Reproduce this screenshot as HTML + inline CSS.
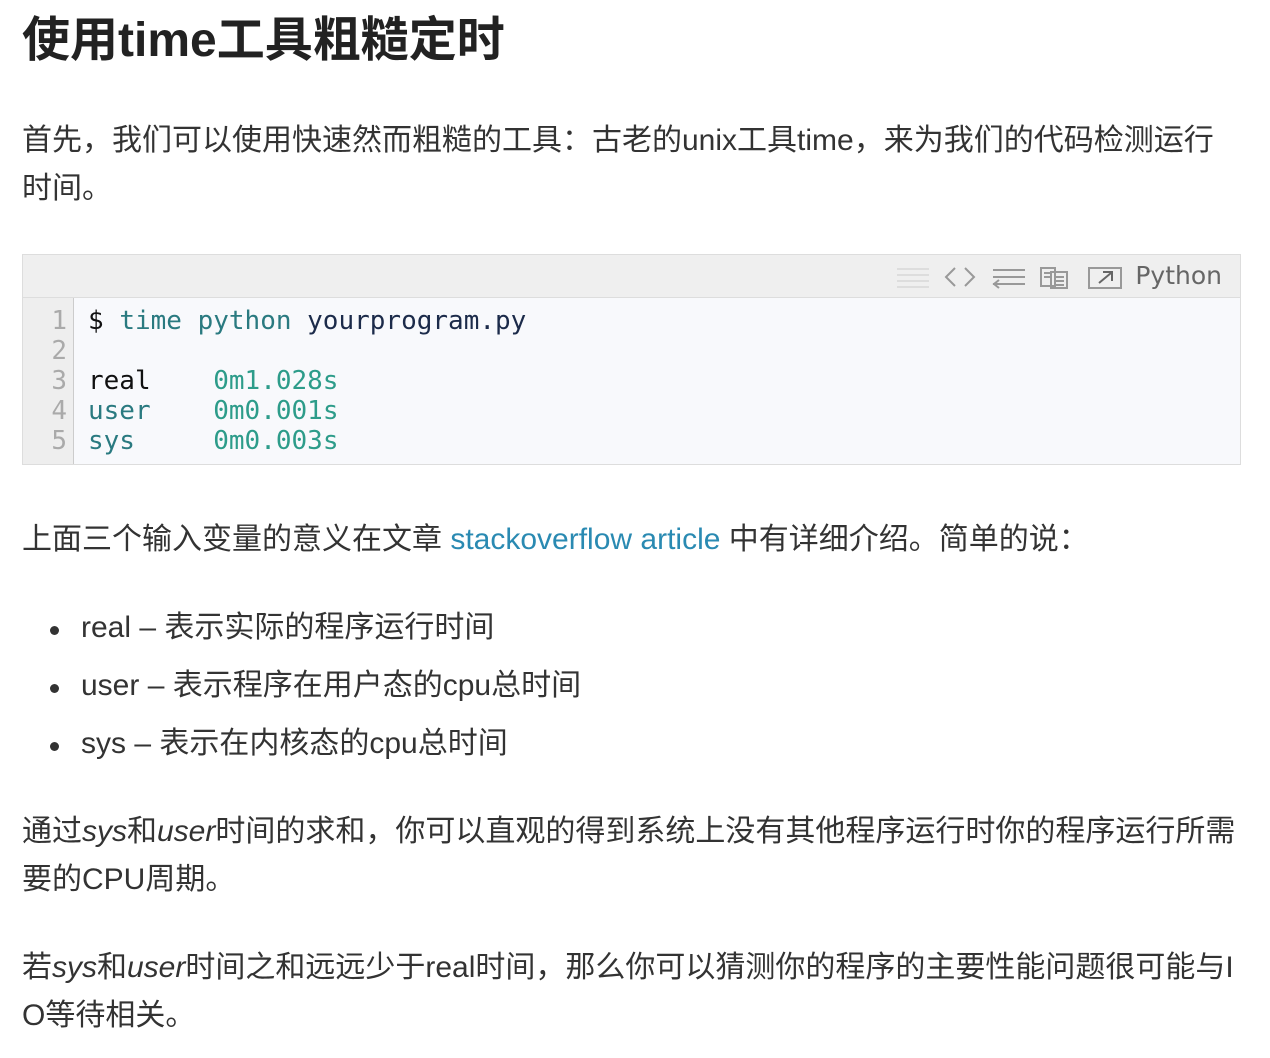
<!DOCTYPE html>
<html><head><meta charset="utf-8"><style>
body{margin:0;background:#fff;width:1270px;height:1058px;overflow:hidden;font-family:"Liberation Sans","Noto Sans CJK SC",sans-serif;color:#333}
.t{position:absolute;left:22px;white-space:nowrap}
h1{position:absolute;left:22px;top:11px;margin:0;font-size:48px;line-height:60px;font-weight:bold;color:#222}
.p{font-size:30px;line-height:48px}
.code{position:absolute;left:22px;top:254px;width:1217px;height:209px;border:1px solid #ddd;background:#f8f9fc}
.bar{height:42px;background:#efefef;border-bottom:1px solid #ddd;position:relative}
.bar .py{position:absolute;right:18px;top:6px;font-family:"DejaVu Sans",sans-serif;font-size:25px;color:#666}
.gut{position:absolute;left:0;top:43px;width:50px;height:166px;background:#eee;border-right:1px solid #ccc}
.ln{position:absolute;left:0;width:44px;text-align:right;font-family:"DejaVu Sans Mono",monospace;font-size:26px;color:#aaa}
.cl{position:absolute;left:65px;font-family:"DejaVu Sans Mono",monospace;font-size:26px;white-space:pre;color:#111}
.k{color:#2a7a80}.n{color:#2d9c8a}.d{color:#1c2b4a}
a{color:#2a8ab2;text-decoration:none}
.dot{position:absolute;left:50px;width:9px;height:9px;border-radius:50%;background:#333}
</style></head><body>
<h1>使用time工具粗糙定时</h1>
<div class="t p" style="top:117px">首先，我们可以使用快速然而粗糙的工具：古老的unix工具time，来为我们的代码检测运行</div>
<div class="t p" style="top:165px">时间。</div>
<div class="code">
<div class="bar">
<svg style="position:absolute;left:872px;top:10px" width="232" height="24" fill="none" stroke="#bbb" stroke-width="2">
<path d="M2 4h32M2 10h32M2 16h32M2 22h32" stroke="#ddd"/>
<path d="M60 3l-9 9 9 9M70 3l9 9-9 9" stroke="#999"/>
<path d="M98 5h32M98 12h32M98 19h32M104 15l-5 4 5 4" stroke="#999"/>
<path d="M146 3h14v18h-14zM156 7h16v16h-16zM149 8h8M149 12h8M159 12h10M159 16h10M159 20h10" stroke="#999"/>
<path d="M194 3h32v20h-32z" stroke="#999"/><path d="M204 18l12-10M208 7h9v9" stroke="#666"/>
</svg>
<span class="py">Python</span></div>
<div class="gut"></div>
<div class="ln" style="top:51px">1</div><div class="ln" style="top:81px">2</div><div class="ln" style="top:111px">3</div><div class="ln" style="top:141px">4</div><div class="ln" style="top:171px">5</div>
<div class="cl" style="top:51px">$ <span class="k">time python</span> <span class="d">yourprogram.py</span></div>
<div class="cl" style="top:111px">real    <span class="n">0m1.028s</span></div>
<div class="cl" style="top:141px"><span class="k">user</span>    <span class="n">0m0.001s</span></div>
<div class="cl" style="top:171px"><span class="k">sys</span>     <span class="n">0m0.003s</span></div>
</div>
<div class="t p" style="top:516px">上面三个输入变量的意义在文章 <a>stackoverflow article</a> 中有详细介绍。简单的说：</div>
<div class="dot" style="top:626px"></div><div class="t p" style="left:81px;top:604px">real – 表示实际的程序运行时间</div>
<div class="dot" style="top:684px"></div><div class="t p" style="left:81px;top:662px">user – 表示程序在用户态的cpu总时间</div>
<div class="dot" style="top:742px"></div><div class="t p" style="left:81px;top:720px">sys – 表示在内核态的cpu总时间</div>
<div class="t p" style="top:808px">通过<i>sys</i>和<i>user</i>时间的求和，你可以直观的得到系统上没有其他程序运行时你的程序运行所需</div>
<div class="t p" style="top:856px">要的CPU周期。</div>
<div class="t p" style="top:944px">若<i>sys</i>和<i>user</i>时间之和远远少于real时间，那么你可以猜测你的程序的主要性能问题很可能与I</div>
<div class="t p" style="top:992px">O等待相关。</div>
</body></html>
